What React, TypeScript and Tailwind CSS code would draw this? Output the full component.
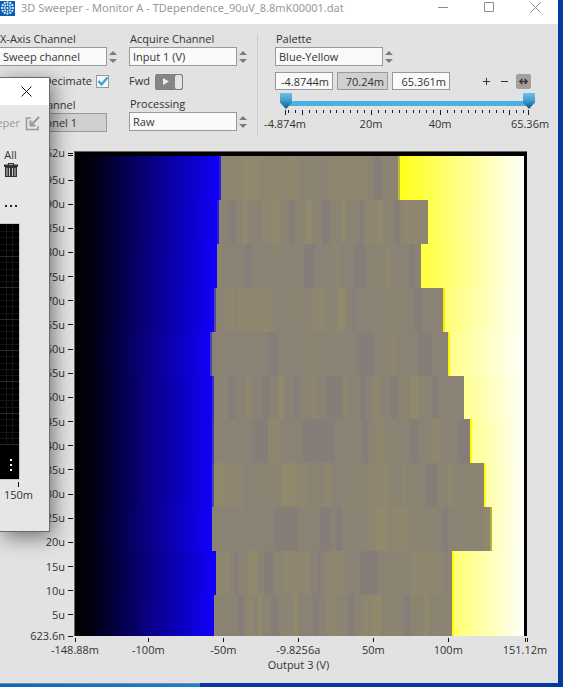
import React from "react";

const TONES: Record<string, string> = {
  a: "#877d78",
  b: "#8a8274",
  c: "#8c8472",
  d: "#8e866f",
  e: "#90896b",
};

type Sweep = {
  start: number;
  end: number;
  from: string;
  edge?: string;
  rise?: string;
  runs: string;
};

// Each run is "position+tone", positions in axis pixels.
const SWEEPS: Sweep[] = [
  { start: 221, end: 398, from: "#ffff18", edge: "#c0b83c", rise: "#2e20d8", runs: "221d 243e 259d 293e 295d 299c 327d 367c 374a 381b 389c" },
  { start: 219, end: 428, from: "#ffff4c", rise: "#2c1ee0", runs: "219c 225b 231a 236c 243e 247c 250b 262d 272e 278d 281c 289a 295c 306e 312c 322a 330c 341e 345c 357b 360a 363c 367d 378e 383c 394a 400c 404d" },
  { start: 217, end: 421, from: "#ffff3c", runs: "217c 223b 244a 252b 270c 284b 304a 315b 327c 335d 338c 340b 354a 365b 371c 385d 391b 410a 415b" },
  { start: 216, end: 443, from: "#ffff74", edge: "#f6f000", rise: "#5143b0", runs: "216c 224d 235c 239d 264e 266d 273b 291c 312d 325c 338e 345c 348b 352a 356b 374c 403b 414a 421b" },
  { start: 212, end: 448, from: "#ffff8c", edge: "#f8f400", rise: "#5143b0", runs: "212b 268a 277b 304c 317b 356a 374b 391d 395c 400b 419a 432b" },
  { start: 214, end: 464, from: "#ffff90", rise: "#3a2cc8", runs: "214c 228a 236b 246d 252b 262a 269b 279e 284b 293a 300b 311d 317b 326a 342c 345d 347b 360a 366b 373d 381b 391a 398c 411e 418c 427b 432a 437b" },
  { start: 214, end: 470, from: "#ffff90", edge: "#fffc00", rise: "#4436b8", runs: "214b 252a 268d 280b 303a 335c 345b 363a 368c 374d 385c 398b 411a 419b 431d 441b 459a" },
  { start: 214, end: 484, from: "#ffffa4", edge: "#fffc00", rise: "#5143b0", runs: "214e 224d 243b 255c 282e 294d 307c 325d 333b 343c 370d 389c 400b 403d 405c 418b 427a 437c 448d 453c" },
  { start: 212, end: 490, from: "#ffffb8", edge: "#b8ae3c", runs: "212b 234c 245b 275a 298b 320a 331b 336a 342b 360c 369d 376e 387d 410c 434b 443a 448b 457c 484d" },
  { start: 216, end: 452, from: "#ffff70", edge: "#fffc00", runs: "216d 230b 234a 238c 248e 257c 264a 273c 284d 310b 317a 321b 326d 345b 360a 377b 387c 412d 441c 445b" },
  { start: 214, end: 452, from: "#ffff70", edge: "#fffc00", runs: "214c 228b 238a 244b 247d 254b 258e 262c 271a 279c 294e 298b 313a 319b 326d 336c 348a 354c 363d 373e 381c 400b 404a 410c 424e 429c 445b" },
];

const BAND_TOPS = [0, 44, 88, 132, 176, 220, 263, 307, 351, 395, 439, 480];
const LEFT = 75;
const RIGHT = 524;

function Heatmap() {
  return (
    <svg
      className="block h-[480px] w-full"
      viewBox="0 0 449 480"
      preserveAspectRatio="none"
      shapeRendering="crispEdges"
      role="img"
      aria-label="Sweep intensity map"
    >
      <defs>
        <linearGradient id="cold" x1="0" x2="1">
          <stop offset="0" stopColor="#000000" />
          <stop offset="0.12" stopColor="#010010" />
          <stop offset="0.3" stopColor="#040042" />
          <stop offset="0.52" stopColor="#080080" />
          <stop offset="0.78" stopColor="#0b00c4" />
          <stop offset="1" stopColor="#1200fc" />
        </linearGradient>
        {SWEEPS.map((s, i) => (
          <linearGradient key={i} id={`warm${i}`} x1="0" x2="1">
            <stop offset="0" stopColor={s.from} />
            <stop offset="1" stopColor="#fffffa" />
          </linearGradient>
        ))}
      </defs>
      {SWEEPS.map((s, i) => {
        const y = BAND_TOPS[i];
        const h = BAND_TOPS[i + 1] - y;
        const warm = s.edge ? s.end + 2 : s.end;
        const runs = s.runs.split(" ").map((r) => ({ x: parseInt(r, 10), tone: r.slice(-1) }));
        return (
          <g key={i}>
            <rect x={0} y={y} width={s.start - LEFT} height={h} fill="url(#cold)" />
            {s.rise && <rect x={s.start - LEFT - 2} y={y} width={2} height={h} fill={s.rise} />}
            {runs.map((r, j) => {
              const next = j + 1 < runs.length ? runs[j + 1].x : s.end;
              return <rect key={j} x={r.x - LEFT} y={y} width={next - r.x} height={h} fill={TONES[r.tone]} />;
            })}
            {s.edge && <rect x={s.end - LEFT} y={y} width={2} height={h} fill={s.edge} />}
            <rect x={warm - LEFT} y={y} width={RIGHT - warm} height={h} fill={`url(#warm${i})`} />
          </g>
        );
      })}
    </svg>
  );
}

function Spinner() {
  return (
    <svg className="h-[14px] w-[8px] shrink-0" viewBox="0 0 8 14" fill="#7c7c7c" aria-hidden="true">
      <path d="M0 5 4 1l4 4zM0 9h8l-4 4z" />
    </svg>
  );
}

function Field({ id, label, value, disabled }: { id: string; label: string; value: string; disabled?: boolean }) {
  return (
    <div className="flex flex-col">
      <label htmlFor={id} className="h-4 pl-px leading-4">
        {label}
      </label>
      <div className="flex items-center gap-[2px]">
        <select
          id={id}
          disabled={disabled}
          className={
            disabled
              ? "h-[19px] w-[108px] appearance-none border border-[#999] bg-[#d0d0d0] pl-[3px] leading-4 text-[#333] opacity-100"
              : "h-[19px] w-[108px] appearance-none border border-[#999] bg-[#fafafa] pl-[3px] leading-4"
          }
        >
          <option>{value}</option>
        </select>
        {!disabled && <Spinner />}
      </div>
    </div>
  );
}

function Logo() {
  const ring = (n: number, r: number, s: number) =>
    Array.from({ length: n }, (_, i) => {
      const t = (i / n) * Math.PI * 2;
      return <circle key={`${r}-${i}`} cx={7.5 + r * Math.cos(t)} cy={7 + r * Math.sin(t)} r={s} />;
    });
  return (
    <svg className="h-[15px] w-[15px] shrink-0" viewBox="0 0 15 15" fill="#e8f2fb" aria-hidden="true">
      <rect width="15" height="15" fill="#0a5cb4" />
      {ring(12, 5.6, 1.1)}
      {ring(8, 3.1, 0.95)}
      <circle cx="7.5" cy="7" r="1.1" />
    </svg>
  );
}

function TitleBar() {
  return (
    <header className="flex h-6 items-start justify-between bg-white pr-[17px]">
      <div className="flex items-center gap-[6px] whitespace-nowrap">
        <Logo />
        <h1 className="font-['Noto_Sans',sans-serif] leading-[16px] text-[#999]">
          3D Sweeper - Monitor A - TDependence_90uV_8.8mK00001.dat
        </h1>
      </div>
      <div className="flex gap-[35px] pt-[2px]">
        <button aria-label="Minimize">
          <svg className="block h-[11px] w-[11px]" viewBox="0 0 11 11" stroke="#8c8c8c" fill="none"><path d="M0 5.5h10" /></svg>
        </button>
        <button aria-label="Maximize">
          <svg className="block h-[11px] w-[11px]" viewBox="0 0 11 11" stroke="#8c8c8c" fill="none"><path d="M.5.5h9v9h-9z" /></svg>
        </button>
        <button aria-label="Close">
          <svg className="block h-[11px] w-[11px]" viewBox="0 0 11 11" stroke="#8c8c8c" fill="none"><path d="m.5.5 10 10m0-10-10 10" /></svg>
        </button>
      </div>
    </header>
  );
}

const MINOR = [-4.874, ...Array.from({ length: 35 }, (_, i) => -4 + i * 2), 65.361];
const scale = (v: number) => ((v + 4.874) / 70.235) * 243;

function RangeSlider() {
  const input =
    "pointer-events-none absolute inset-0 h-4 w-full appearance-none bg-transparent [&::-webkit-slider-thumb]:h-4 [&::-webkit-slider-thumb]:w-3 [&::-webkit-slider-thumb]:appearance-none [&::-webkit-slider-thumb]:bg-linear-to-b [&::-webkit-slider-thumb]:from-[#6cc0ea] [&::-webkit-slider-thumb]:to-[#0d5678] [&::-webkit-slider-thumb]:via-[#3b9cc9] [&::-webkit-slider-thumb]:[clip-path:polygon(0_0,100%_0,100%_60%,50%_100%,0_60%)]";
  return (
    <div className="mt-[3px] ml-[5px] w-[255px]">
      <div className="relative flex h-4 items-center pt-[5px]">
        <div className="mx-[6px] h-[5px] flex-1 bg-[#4bb1e4]" />
        <input type="range" aria-label="Palette minimum" min={-4.874} max={65.361} step="any" defaultValue={-4.874} className={input} />
        <input type="range" aria-label="Palette maximum" min={-4.874} max={65.361} step="any" defaultValue={65.361} className={input} />
      </div>
      <svg className="mx-[5px] mt-px block h-[6px] w-[245px]" viewBox="0 0 245 6" shapeRendering="crispEdges" aria-hidden="true">
        {MINOR.map((v) => {
          const major = v % 20 === 0 || v === -4.874 || v === 65.361;
          return <rect key={v} x={Math.round(scale(v))} y={0} width={1} height={major ? 5 : 3} fill="#1c1c1c" />;
        })}
      </svg>
      <div className="mx-[5px] flex h-4 leading-4">
        <span className="flex w-0 justify-center">-4.874m</span>
        <span className="flex w-[172px] justify-center">20m</span>
        <span className="-ml-[17px] flex w-0 justify-center">40m</span>
        <span className="ml-auto flex w-0 justify-center">65.36m</span>
      </div>
    </div>
  );
}

function PaletteValues() {
  const box = "h-[18px] border border-[#999] pr-[3px] text-right leading-4";
  return (
    <div className="mt-[6px] flex items-center gap-1">
      <input aria-label="Minimum" defaultValue="-4.8744m" className={`${box} w-[58px] bg-[#fafafa]`} />
      <input aria-label="Span" readOnly value="70.24m" className={`${box} w-[51px] bg-[#d0d0d0]`} />
      <input aria-label="Maximum" defaultValue="65.361m" className={`${box} w-[58px] bg-[#fafafa]`} />
      <div className="ml-7 flex items-center gap-[9px]">
        <button aria-label="Expand range">
          <svg className="block h-[9px] w-[9px]" viewBox="0 0 9 9" stroke="#333" fill="none" shapeRendering="crispEdges"><path d="M1 4.5h7M4.5 1v7" /></svg>
        </button>
        <button aria-label="Shrink range">
          <svg className="block h-[9px] w-[9px]" viewBox="0 0 9 9" stroke="#333" fill="none" shapeRendering="crispEdges"><path d="M1 4.5h7" /></svg>
        </button>
        <button aria-label="Auto range" className="-ml-[2px] rounded-[2px] bg-[#a0a0a0]">
          <svg className="block h-[15px] w-[15px]" viewBox="0 0 15 15" fill="none">
            <path d="M2.500 4.500v6M12.500 4.500v6" stroke="#d89c3c" strokeWidth="0.8" />
            <path d="M4.500 7.500h6M6.300 5 3.800 7.500l2.500 2.500M8.700 5l2.500 2.500L8.700 10" stroke="#383838" strokeWidth="1.4" />
          </svg>
        </button>
      </div>
    </div>
  );
}

function Controls() {
  return (
    <section className="-ml-px flex pt-[7px]">
      <div className="w-[130px] shrink-0">
        <Field id="xaxis" label="X-Axis Channel" value="Sweep channel" />
        <div className="flex h-[31px] w-[110px] items-center justify-end gap-[4px]">
          <label htmlFor="decimate">Decimate</label>
          <span className="relative flex">
            <input id="decimate" type="checkbox" defaultChecked className="h-[13px] w-[13px] appearance-none border border-[#999] bg-[#f4f4f4]" />
            <svg className="pointer-events-none absolute inset-0 h-[13px] w-[13px]" viewBox="0 0 13 13" fill="none" stroke="#3aa5dc" strokeWidth="2.4">
              <path d="m2.500 6 3 3.500 6-7" />
            </svg>
          </span>
        </div>
        <Field id="ychannel" label="Y-Axis Channel" value="Line channel 1" disabled />
      </div>
      <div className="w-[128px] shrink-0">
        <Field id="acquire" label="Acquire Channel" value="Input 1 (V)" />
        <div className="flex h-[30px] items-center gap-[5px] pt-px">
          <span id="fwd">Fwd</span>
          <button role="switch" aria-checked="true" aria-labelledby="fwd" className="flex h-4 w-7 items-center justify-between rounded-[2px] border border-[#808080] bg-[#858585]">
            <svg className="ml-[7px] h-[7px] w-[6px]" viewBox="0 0 6 7" fill="#eee"><path d="M0 0 6 3.500 0 7z" /></svg>
            <span className="h-[14px] w-[7px] rounded-[2px] bg-[#e4e4e4]" />
          </button>
        </div>
        <Field id="processing" label="Processing" value="Raw" />
      </div>
      <div className="mt-1 h-[101px] w-px bg-[#cbcbcb]" />
      <div className="ml-[17px] flex-1">
        <Field id="palette" label="Palette" value="Blue-Yellow" />
        <PaletteValues />
        <RangeSlider />
      </div>
    </section>
  );
}

const Y_VALUES = Array.from({ length: 19 }, (_, i) => `${95 - i * 5}u`);
const X_TICKS = [
  { label: "-148.88m", span: 48.88 },
  { label: "-100m", span: 50 },
  { label: "-50m", span: 50 },
  { label: "-9.8256a", span: 50 },
  { label: "50m", span: 50 },
  { label: "100m", span: 51.12 },
];

function YTick({ label }: { label: string }) {
  return (
    <li className="flex h-0 items-center justify-end gap-[3px]">
      <span className="leading-4">{label}</span>
      <span className="h-px w-[5px] bg-[#111]" />
    </li>
  );
}

function Plot() {
  return (
    <section className="mt-[15px] flex pr-[31px]">
      <ul className="flex h-[485px] w-[74px] shrink-0 flex-col pr-px pt-[2px]">
        <YTick label="99.62u" />
        <li className="ml-auto mt-[2px] h-px w-[5px] bg-[#111]" />
        <li className="mt-6 flex h-[435px] flex-col">
          <ul className="flex h-full flex-col justify-between">
            {Y_VALUES.map((v) => (
              <YTick key={v} label={v} />
            ))}
          </ul>
        </li>
        <li className="mt-[21px]">
          <ul>
            <YTick label="623.6n" />
          </ul>
        </li>
      </ul>
      <div className="min-w-0 flex-1">
        <div className="border-l border-t border-[#666]">
          <div className="border-r-[3px] border-t-4 border-black">
            <Heatmap />
          </div>
        </div>
        <ul className="flex h-[22px] pl-[1px] pr-[2px] pt-[2px]">
          {X_TICKS.map((t) => (
            <li key={t.label} className="w-0" style={{ flexGrow: t.span }}>
              <span className="block h-1 w-px bg-[#111]" />
              <span className="flex w-0 justify-center whitespace-nowrap leading-4">{t.label}</span>
            </li>
          ))}
          <li className="w-0">
            <span className="block h-1 w-[3px] border-x border-[#111]" />
            <span className="flex w-0 justify-center leading-4">151.12m</span>
          </li>
        </ul>
        <p className="mr-1 text-center leading-[14px]">Output 3 (V)</p>
      </div>
    </section>
  );
}

function Popup() {
  return (
    <aside className="absolute left-0 top-[77px] flex h-[455px] w-[50px] flex-col overflow-visible border-b border-r border-t border-[#6a6a6a] bg-[#e6e6e6] shadow-[3px_5px_20px_rgba(0,0,0,0.5)]">
      <div className="flex h-[27px] shrink-0 items-center justify-center bg-white pl-[3px]">
        <button aria-label="Close panel">
          <svg className="block h-[11px] w-[11px]" viewBox="0 0 11 11" stroke="#111" fill="none"><path d="m.5.5 10 10m0-10-10 10" /></svg>
        </button>
      </div>
      <div className="mt-[10px] flex h-4 items-center justify-between pr-[9px]">
        <span className="flex w-[20px] justify-end text-[#999]">Sweeper</span>
        <button aria-label="Dock">
          <svg className="block h-[15px] w-[15px]" viewBox="0 0 15 15" fill="none" stroke="#999" strokeWidth="2">
            <path d="M6 2H1.500v11.500H13V10" strokeWidth="1.500" />
            <path d="M14 1 6 9M5.500 4.500V9.500H10.500" />
          </svg>
        </button>
      </div>
      <div className="mt-[16px] flex w-[21px] flex-col items-center">
        <span className="leading-4">All</span>
        <button aria-label="Delete all">
          <svg className="block h-[14px] w-[14px]" viewBox="0 0 14 14" fill="#333">
            <path d="M4 0h6v1.500h4V4H0V1.500h4zM5.200 1v.8h3.600V1zM1 4h12v10H1z" fillRule="evenodd" />
            <path d="M2.500 5h1v8h-1zM5 5h1v8H5zM8 5h1v8H8zM10.500 5h1v8h-1z" fill="#ccc" />
          </svg>
        </button>
        <button aria-label="More" className="mt-[28px] flex gap-[3px] pl-px">
          <i className="h-[2px] w-[2px] bg-[#222]" />
          <i className="h-[2px] w-[2px] bg-[#222]" />
          <i className="h-[2px] w-[2px] bg-[#222]" />
        </button>
      </div>
      <svg className="mt-[16px] block h-[257px] w-[20px] shrink-0" viewBox="0 0 20 257" shapeRendering="crispEdges" aria-hidden="true">
        <rect width="20" height="257" fill="#c8c8c8" />
        <rect y="1" width="19" height="255" fill="#000" />
        <path d="M6.500 1v220M12.500 1v220" stroke="#161616" />
        {Array.from({ length: 35 }, (_, i) => (
          <rect key={i} x="0" y={Math.round(8 + i * 6.270)} width="19" height="1" fill={i % 5 === 4 ? "#2a2a2a" : "#141414"} />
        ))}
        <path d="M10 236h2v2h-2zM10 241h2v2h-2zM10 246h2v2h-2z" fill="#fff" />
      </svg>
      <div className="mt-[2px] flex w-[37px] flex-col items-center">
        <span className="h-[5px] w-px bg-[#111]" />
        <span className="leading-4">150m</span>
      </div>
    </aside>
  );
}

export default function App() {
  return (
    <div className="flex min-h-screen flex-col overflow-hidden bg-[#0339a0] font-['Open_Sans','Noto_Sans',sans-serif] text-[11px] text-[#333]">
      <main className="relative mr-[5px] flex-1 overflow-hidden bg-[#e2e2e2]">
        <TitleBar />
        <Controls />
        <Plot />
        <Popup />
      </main>
      <div className="h-1 w-[200px] border-t border-[#6f8fb0] bg-linear-to-r from-[#0a68b8] to-[#1d80cc]" />
    </div>
  );
}
